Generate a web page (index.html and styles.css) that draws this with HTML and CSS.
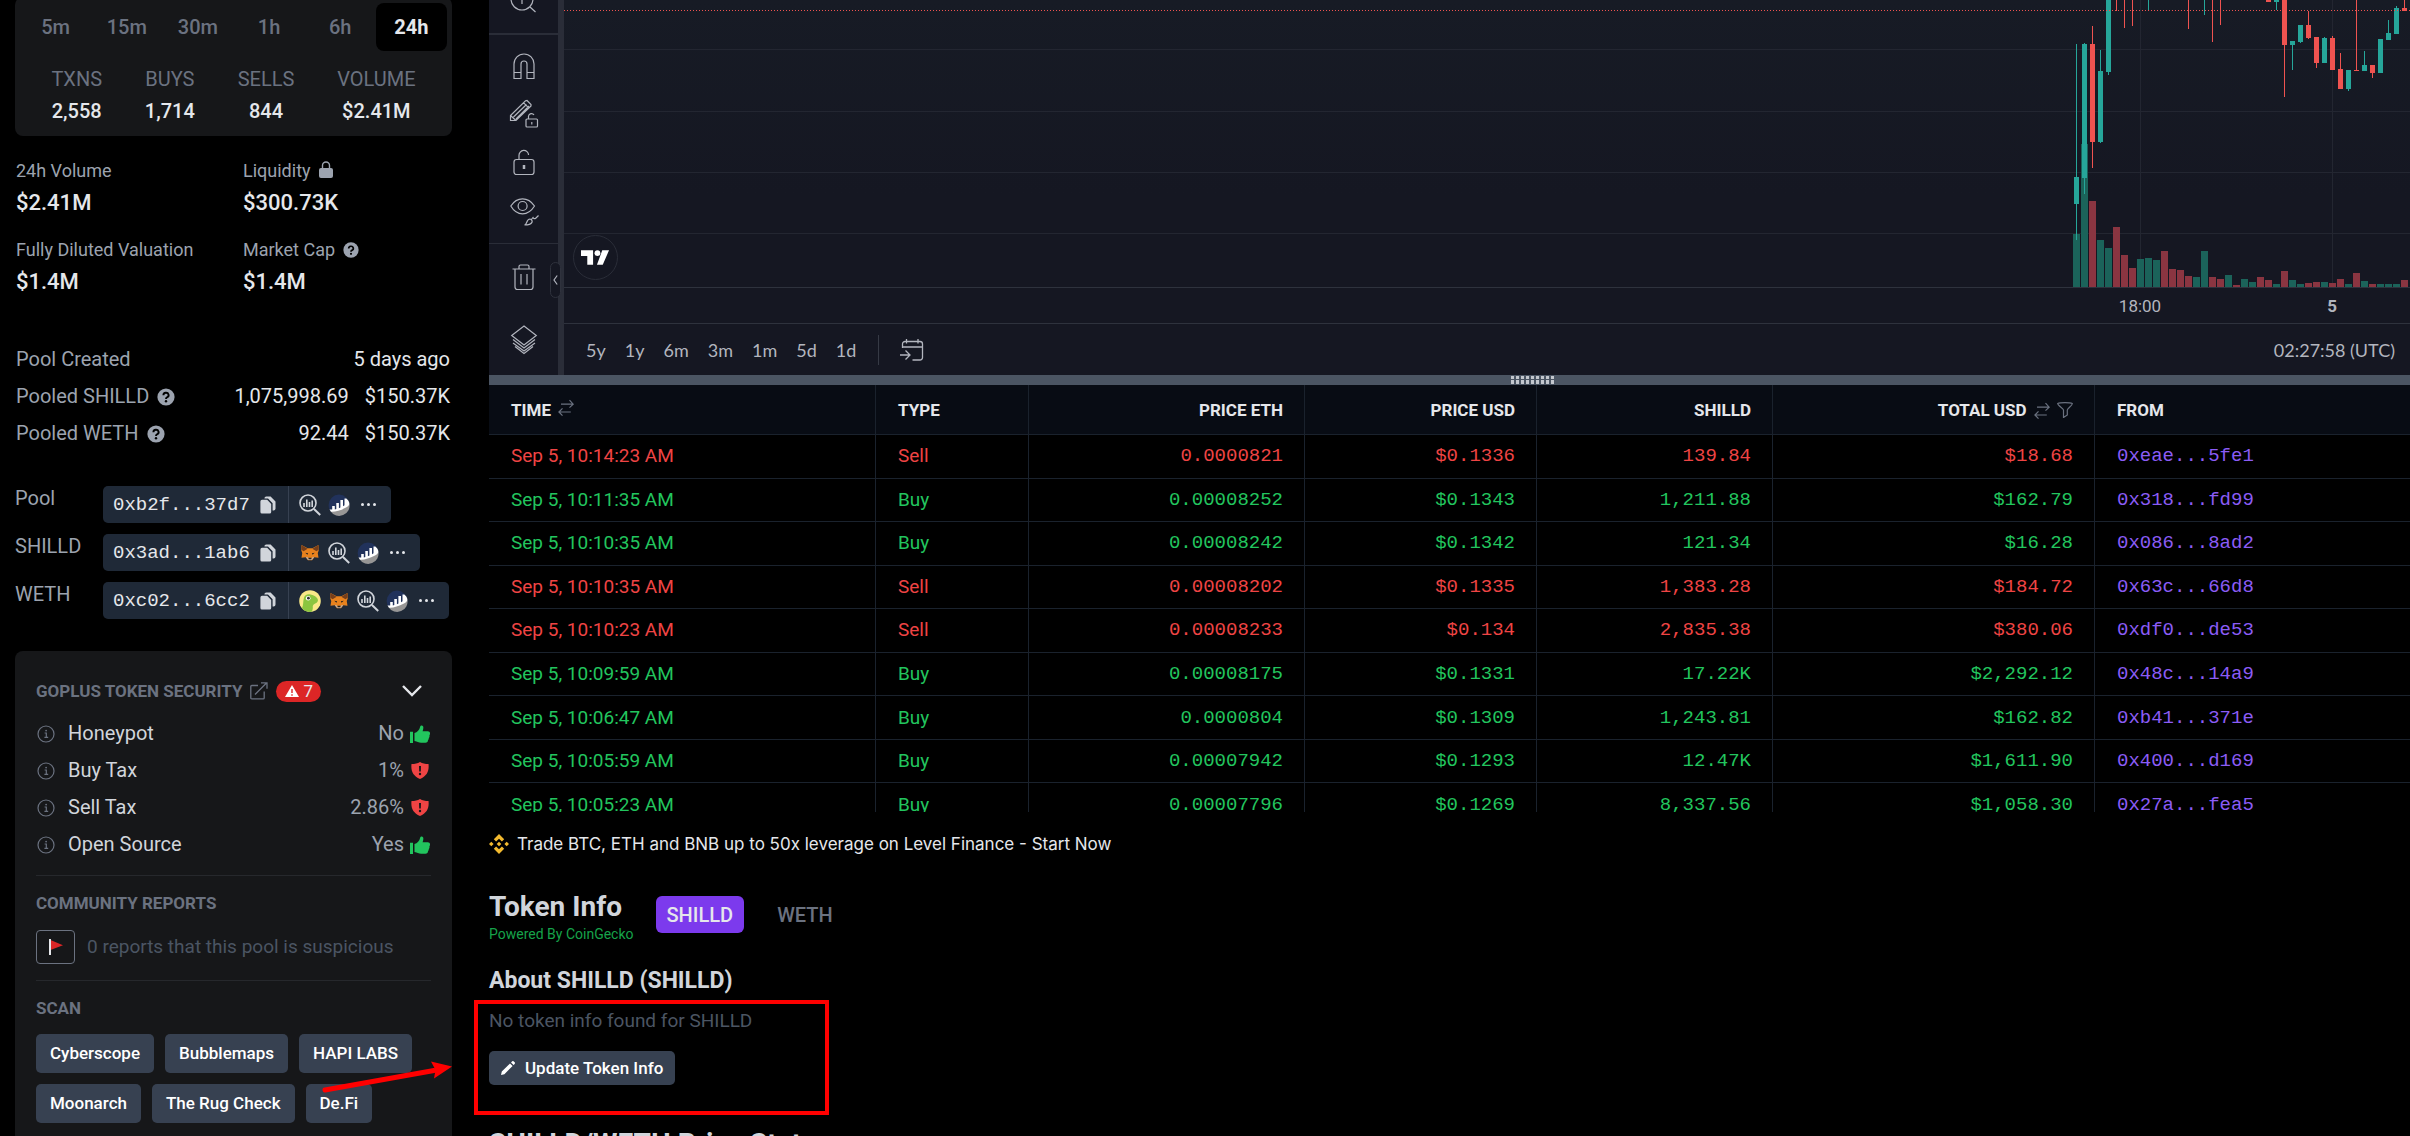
FILE: index.html
```html
<!DOCTYPE html>
<html lang="en">
<head>
    <meta charset="UTF-8">
    <meta name="viewport" content="width=device-width, initial-scale=1.0">
    <title>SHILLD / WETH</title>
    <link rel="stylesheet" href="styles.css">
</head>
<body>
<!-- shared icons -->
<svg class="defs" aria-hidden="true">
    <symbol id="i-help" viewBox="0 0 18 18"><circle cx="9" cy="9" r="8.6" fill="#9ca3af"/><path d="M6.4 7.2a2.6 2.4 0 1 1 3.6 2.2c-.8.4-1 .7-1 1.5" fill="none" stroke="#000" stroke-width="1.9"/><circle cx="9" cy="13.3" r="1.2" fill="#000"/></symbol>
    <symbol id="i-copy" viewBox="0 0 16 18"><path d="M2 3.8h5.2l4 4.2v8a1.6 1.6 0 0 1-1.6 1.6H2A1.6 1.6 0 0 1 .4 16V5.4A1.6 1.6 0 0 1 2 3.8z"/><path d="M4.4 2.6A2 2 0 0 1 6.4.5h4.2l4.9 5v6.900a2 2 0 0 1-2 2h-.9V7.200L8 2.600z"/></symbol>
    <symbol id="i-scan" viewBox="0 0 22 22"><g fill="none" stroke="#d1d5db" stroke-width="1.6"><circle cx="9" cy="9" r="8"/><path d="M15 15l6.200 6" stroke-width="2"/><path d="M5 9v4M7.800 5.500V13M10.500 8v5M13.200 6.500V13"/></g></symbol>
    <symbol id="i-ether" viewBox="0 0 22 22"><circle cx="11" cy="11" r="10.4" fill="#21325b"/><path d="M2.500 17.200C9 16.500 17 13 21.400 9.500A10.400 10.400 0 0 1 2.500 17.200z" fill="#979695"/><path d="M1.500 15.600h2.700V12h2.600v3.400l1.500-.4V9h2.600v5.200l1.500-.7V6h2.600v6.200l1.500-.9V4.600h1.800l1.800 1.600C22.600 10 21 12 18 13.600 12.500 16.600 7 18 3 17.700z" fill="#fff"/></symbol>
    <symbol id="i-fox" viewBox="0 0 20 18"><path d="M1 1l6.500 3.500h5L19 1l.2 6-1 2.500.8 5-4.500-.6-2.300 3.300H7.800l-2.300-3.300-4.500.6.800-5L.8 7z" fill="#e8821e"/><path d="M1 1l6.500 4-4.300 2.800L.9 6zM19 1l-6.500 4 4.300 2.800L19.100 6z" fill="#763e1a"/><path d="M7.300 13.700l-1.800.3 2.500 3h4l2.500-3-1.800-.3-.9 1.600H8.200z" fill="#c0ad9e"/><path d="M5 9.300l3 .6-.7 1.400zM15 9.300l-3 .6.700 1.400zM8.500 14.500h3v1.700h-3z" fill="#1f2020"/></symbol>
    <symbol id="i-gecko" viewBox="0 0 22 22"><circle cx="11" cy="11" r="10.8" fill="#f9e988"/><path d="M3 18.300C4.500 15 4 11.500 4.800 8.500 5.500 5 8.500 3.800 11.500 4.600c2.500.6 5 1.600 6.700 3.600 1.300 1.700.8 3.800-1 4.700-2.300 1-3.700 2.200-3.400 4.200.1 1.800-.3 3.500-1.300 4.700C8.500 22.200 5 21 3 18.300z" fill="#8bc53f"/><circle cx="9.200" cy="8.200" r="2.300" fill="#fff"/><circle cx="9.400" cy="8.200" r="1.400" fill="#333"/></symbol>
    <symbol id="i-info" viewBox="0 0 18 18"><circle cx="9" cy="9" r="8" fill="none" stroke="#6b7280" stroke-width="1.2"/><path d="M7.600 8h1.700v4.300M7.400 12.400h3.800" fill="none" stroke="#6b7280" stroke-width="1.2"/><circle cx="9.1" cy="5.6" r=".9" fill="#6b7280"/></symbol>
    <symbol id="i-thumb" viewBox="0 0 20 18"><path d="M0 6.800h3V18H0zM4.500 8c2.800-1 5-3 5.700-6.600C10.500 0 13 .2 13.300 2c.2 1.400-.2 2.900-.7 4.200h5.200c1.500 0 2.400 1.200 2.200 2.600 0 .7-.3 1.200-.6 1.600.3 1.200 0 2-.6 2.600.1 1-.2 1.800-.8 2.300 0 1.500-.9 2.500-2.600 2.500-3.800.2-6.700 0-9-1.200L4.500 16z" fill="#22c55e"/></symbol>
    <symbol id="i-shield" viewBox="0 0 18 17"><path d="M9 0c2.500 1.500 5 2 8.500 2C18.300 9 16 14 9 17 2 14-.3 9 .5 2 4 2 6.500 1.500 9 0z" fill="#ef4444"/><path d="M8 4h2l-.2 5.500H8.200z" fill="#161719"/><circle cx="9" cy="12" r="1.2" fill="#161719"/></symbol>
    <symbol id="i-swap" viewBox="0 0 16 18"><path d="M3 5.200h12M11.500 1.200l3.700 4-3.700 3.400M12.800 13H1M4.500 9.400L.9 13l3.600 3.700" fill="none" stroke="#6b7280" stroke-width="1.2"/></symbol>
</svg>

<div class="page">
    <aside class="sidebar">
        <section class="card stats">
            <div class="tabs">
                <button>5m</button><button>15m</button><button>30m</button><button>1h</button><button>6h</button><button class="on">24h</button>
            </div>
            <dl class="counts">
                <div><dt>TXNS</dt><dd>2,558</dd></div>
                <div><dt>BUYS</dt><dd>1,714</dd></div>
                <div><dt>SELLS</dt><dd>844</dd></div>
                <div><dt>VOLUME</dt><dd>$2.41M</dd></div>
            </dl>
        </section>

        <dl class="figures">
            <div><dt>24h Volume</dt><dd>$2.41M</dd></div>
            <div><dt>Liquidity <svg class="lock" viewBox="0 0 14 17"><path d="M3.500 8V4.500a3.500 3.500 0 0 1 7 0V8" fill="none" stroke="#9ca3af" stroke-width="1.4"/><rect y="7" width="14" height="10" rx="2" fill="#9ca3af"/></svg></dt><dd>$300.73K</dd></div>
            <div><dt>Fully Diluted Valuation</dt><dd>$1.4M</dd></div>
            <div><dt>Market Cap <svg class="help small"><use href="#i-help"/></svg></dt><dd>$1.4M</dd></div>
        </dl>

        <dl class="pooled">
            <div><dt>Pool Created</dt><dd>5 days ago</dd></div>
            <div><dt>Pooled SHILLD <svg class="help"><use href="#i-help"/></svg></dt><dd><span>1,075,998.69</span><span>$150.37K</span></dd></div>
            <div><dt>Pooled WETH <svg class="help"><use href="#i-help"/></svg></dt><dd><span>92.44</span><span>$150.37K</span></dd></div>
        </dl>

        <div class="addresses">
            <div class="address">
                <span class="name">Pool</span>
                <div class="chip">
                    <button class="hash">0xb2f...37d7 <svg class="copy"><use href="#i-copy"/></svg></button>
                    <div class="links">
                        <a href="#" aria-label="Scan"><svg><use href="#i-scan"/></svg></a>
                        <a href="#" aria-label="Explorer"><svg><use href="#i-ether"/></svg></a>
                        <button class="more" aria-label="More"><i></i><i></i><i></i></button>
                    </div>
                </div>
            </div>
            <div class="address">
                <span class="name">SHILLD</span>
                <div class="chip">
                    <button class="hash">0x3ad...1ab6 <svg class="copy"><use href="#i-copy"/></svg></button>
                    <div class="links">
                        <a href="#" aria-label="Add to wallet"><svg class="fox"><use href="#i-fox"/></svg></a>
                        <a href="#" aria-label="Scan"><svg><use href="#i-scan"/></svg></a>
                        <a href="#" aria-label="Explorer"><svg><use href="#i-ether"/></svg></a>
                        <button class="more" aria-label="More"><i></i><i></i><i></i></button>
                    </div>
                </div>
            </div>
            <div class="address">
                <span class="name">WETH</span>
                <div class="chip">
                    <button class="hash">0xc02...6cc2 <svg class="copy"><use href="#i-copy"/></svg></button>
                    <div class="links">
                        <a href="#" aria-label="CoinGecko"><svg><use href="#i-gecko"/></svg></a>
                        <a href="#" aria-label="Add to wallet"><svg class="fox"><use href="#i-fox"/></svg></a>
                        <a href="#" aria-label="Scan"><svg><use href="#i-scan"/></svg></a>
                        <a href="#" aria-label="Explorer"><svg><use href="#i-ether"/></svg></a>
                        <button class="more" aria-label="More"><i></i><i></i><i></i></button>
                    </div>
                </div>
            </div>
        </div>

        <section class="card security">
            <header>
                <h3>GOPLUS TOKEN SECURITY</h3>
                <a href="#" aria-label="Open report"><svg class="ext" viewBox="0 0 18 18"><path d="M8 3.500H1.800A1 1 0 0 0 .8 4.500v11.400a1 1 0 0 0 1 1h11.400a1 1 0 0 0 1-1V9.500M5 12.500L16.500 1M11 .8h6v6" fill="none" stroke="#6b7280" stroke-width="1.3"/></svg></a>
                <span class="badge"><svg viewBox="0 0 14 12"><path d="M7 0l7 12H0z" fill="#fff"/><path d="M7 4v4M7 9.300v1.400" stroke="#dc2626" stroke-width="1.4"/></svg>7</span>
                <button class="fold" aria-label="Collapse"><svg viewBox="0 0 20 12"><path d="M1 1l9 9 9-9" fill="none" stroke="#e5e7eb" stroke-width="2.4"/></svg></button>
            </header>
            <ul class="checks">
                <li><svg class="info"><use href="#i-info"/></svg>Honeypot<span>No</span><svg class="thumb"><use href="#i-thumb"/></svg></li>
                <li><svg class="info"><use href="#i-info"/></svg>Buy Tax<span>1%</span><svg class="shield"><use href="#i-shield"/></svg></li>
                <li><svg class="info"><use href="#i-info"/></svg>Sell Tax<span>2.86%</span><svg class="shield"><use href="#i-shield"/></svg></li>
                <li><svg class="info"><use href="#i-info"/></svg>Open Source<span>Yes</span><svg class="thumb"><use href="#i-thumb"/></svg></li>
            </ul>
            <div class="block">
                <h3>COMMUNITY REPORTS</h3>
                <div class="report">
                    <button aria-label="Report pool"><svg viewBox="0 0 14 16"><path d="M1.500 1L14 6.200 1.500 11z" fill="#dc2626"/><path d="M1 0v16" stroke="#e5e7eb" stroke-width="2"/></svg></button>
                    0 reports that this pool is suspicious
                </div>
            </div>
            <div class="block">
                <h3>SCAN</h3>
                <div class="scans">
                    <a class="btn" href="#">Cyberscope</a>
                    <a class="btn" href="#">Bubblemaps</a>
                    <a class="btn" href="#">HAPI LABS</a>
                    <a class="btn" href="#">Moonarch</a>
                    <a class="btn" href="#">The Rug Check</a>
                    <a class="btn" href="#">De.Fi</a>
                </div>
            </div>
        </section>
    </aside>

    <main class="main">
        <section class="chart">
            <nav class="tools">
                <div class="group first">
                    <button aria-label="Zoom in"><svg viewBox="0 0 28 28"><circle cx="12" cy="13" r="11"/><path d="M12 8v10M7 13h10M20 21l5.500 5"/></svg></button>
                </div>
                <div class="group middle">
                    <button aria-label="Magnet"><svg viewBox="0 0 28 28"><path d="M4 26.500V12a10 10 0 0 1 20 0v14.500h-7V12a3 3 0 0 0-6 0v14.500zM4 20.500h7M17 20.500h7"/></svg></button>
                    <button aria-label="Stay in drawing mode"><svg viewBox="0 0 28 28"><path d="M.5 20.500v-5L15.500.700l1.500-.200 4 4v1.500L6 20.500zM.5 15.500l5.500 5M3.500 17l13-12.500M6 19L19 6M13.500 2.700l5.200 5.200"/><rect x="16" y="19" width="11.5" height="8" rx="1"/><path d="M18.500 19v-3a3 3 0 0 1 5.500-1M21.800 22v2.500"/></svg></button>
                    <button aria-label="Lock drawings"><svg viewBox="0 0 28 28"><rect x="4" y="11.5" width="20" height="15" rx="2.5"/><path d="M9 11.500V7.500a4.800 4.800 0 0 1 9.600-.5"/><path d="M14 17v4" stroke-width="2.5"/></svg></button>
                    <button aria-label="Hide drawings"><svg viewBox="0 0 28 28"><path d="M.8 10C7 .5 18 .5 24.500 10 18 20.500 7 20.500.8 10z"/><circle cx="12.6" cy="10" r="4.5"/><path d="M14.500 29c3-.5 1.500-6 5.500-6 3.500 1 3.500 6-5.500 6zM21 24l2-2.500c.5 1 1.500 1.500 2.500 1l3-3"/></svg></button>
                </div>
                <div class="group last">
                    <button aria-label="Remove drawings"><svg viewBox="0 0 28 28"><path d="M2.500 6h23M9 6V3.500a1.500 1.500 0 0 1 1.500-1.500h7A1.500 1.500 0 0 1 19 3.500V6M5 6v18a2.500 2.500 0 0 0 2.500 2.500h13A2.500 2.500 0 0 0 23 24V6M11 11v10.500M17 11v10.500"/></svg></button>
                    <button aria-label="Object tree"><svg viewBox="0 0 28 28"><path d="M14 0l12.300 9.500L14 19 1.700 9.500zM3 13.500L14 22l11-8.500M3 17l11 8 11-8M5 20.500l9 7 9-7"/></svg></button>
                </div>
                <button class="collapse" aria-label="Collapse toolbar"><svg viewBox="0 0 5 10"><path d="M4.200.5L1 5l3.200 4.500" fill="none" stroke="#b2b5be" stroke-width="1.2"/></svg></button>
            </nav>
            <div class="plot">
                <div class="canvas">
                    <svg width="100%" height="324">
                        <path d="M0 49.500h5000M0 111.500h5000M0 172.500h5000M0 233.500h5000" stroke="#232631"/>
                        <path d="M0 287.500h5000M0 323.500h5000" stroke="#2e323d"/>
                        <!-- origin is the right edge of the plot -->
                        <svg x="100%" overflow="visible" id="series">
                            <path d="M-269.500 0v287M-77.500 0v287" stroke="#232631"/>
                        </svg>
                        <path d="M0 10.500h5000" stroke="#ef5350" stroke-dasharray="1 2"/>
                    </svg>
                    <a class="tv" href="#" aria-label="TradingView"><svg viewBox="0 0 30 16"><path d="M0 0h12.500v15H6.500V6H0zM22 0h7l-6.500 15H16.500z" fill="#fff"/><circle cx="17" cy="3" r="3" fill="#fff"/></svg></a>
                </div>
                <div class="ranges">
                    <button>5y</button><button>1y</button><button>6m</button><button>3m</button><button>1m</button><button>5d</button><button>1d</button>
                    <button class="goto" aria-label="Go to date"><svg viewBox="0 0 24 22"><path d="M2.500 9V5A2.500 2.500 0 0 1 5 2.500h15A2.500 2.500 0 0 1 22.500 5v13.500A2.500 2.500 0 0 1 20 21h-7.500M2.500 8h20M6.500 0v4.500M18 0v4.500M0 16h9.500M5.500 11.500L10 16l-4.500 4.500" fill="none" stroke="#b2b5be" stroke-width="1.3"/></svg></button>
                    <span class="clock">02:27:58 (UTC)</span>
                </div>
            </div>
        </section>

        <div class="handle"><i></i></div>

        <div class="trades">
            <table>
                <colgroup><col class="c-time"><col class="c-type"><col class="c-eth"><col class="c-usd"><col class="c-amount"><col class="c-total"><col></colgroup>
                <thead>
                    <tr><th>TIME <svg class="swap up"><use href="#i-swap"/></svg></th><th>TYPE</th><th class="num">PRICE ETH</th><th class="num">PRICE USD</th><th class="num">SHILLD</th><th class="num">TOTAL USD <svg class="swap"><use href="#i-swap"/></svg> <svg class="funnel" viewBox="0 0 16 16"><path d="M.7 1.500C3 .3 13 .3 15.300 1.500c.3 2-5 5-5 6.500v5L6.500 15.500V8C6.500 6.500.5 3.500.7 1.500z" fill="none" stroke="#6b7280" stroke-width="1.2"/></svg></th><th>FROM</th></tr>
                </thead>
                <tbody>
                    <tr class="sell"><td>Sep 5, 10:14:23 AM</td><td>Sell</td><td>0.0000821</td><td>$0.1336</td><td>139.84</td><td>$18.68</td><td><a href="#">0xeae...5fe1</a></td></tr>
                    <tr class="buy"><td>Sep 5, 10:11:35 AM</td><td>Buy</td><td>0.00008252</td><td>$0.1343</td><td>1,211.88</td><td>$162.79</td><td><a href="#">0x318...fd99</a></td></tr>
                    <tr class="buy"><td>Sep 5, 10:10:35 AM</td><td>Buy</td><td>0.00008242</td><td>$0.1342</td><td>121.34</td><td>$16.28</td><td><a href="#">0x086...8ad2</a></td></tr>
                    <tr class="sell"><td>Sep 5, 10:10:35 AM</td><td>Sell</td><td>0.00008202</td><td>$0.1335</td><td>1,383.28</td><td>$184.72</td><td><a href="#">0x63c...66d8</a></td></tr>
                    <tr class="sell"><td>Sep 5, 10:10:23 AM</td><td>Sell</td><td>0.00008233</td><td>$0.134</td><td>2,835.38</td><td>$380.06</td><td><a href="#">0xdf0...de53</a></td></tr>
                    <tr class="buy"><td>Sep 5, 10:09:59 AM</td><td>Buy</td><td>0.00008175</td><td>$0.1331</td><td>17.22K</td><td>$2,292.12</td><td><a href="#">0x48c...14a9</a></td></tr>
                    <tr class="buy"><td>Sep 5, 10:06:47 AM</td><td>Buy</td><td>0.0000804</td><td>$0.1309</td><td>1,243.81</td><td>$162.82</td><td><a href="#">0xb41...371e</a></td></tr>
                    <tr class="buy"><td>Sep 5, 10:05:59 AM</td><td>Buy</td><td>0.00007942</td><td>$0.1293</td><td>12.47K</td><td>$1,611.90</td><td><a href="#">0x400...d169</a></td></tr>
                    <tr class="buy"><td>Sep 5, 10:05:23 AM</td><td>Buy</td><td>0.00007796</td><td>$0.1269</td><td>8,337.56</td><td>$1,058.30</td><td><a href="#">0x27a...fea5</a></td></tr>
                </tbody>
            </table>
        </div>

        <a class="promo" href="#"><svg viewBox="0 0 20 20"><path d="M10 0l5.200 5.200-2.300 2.300L10 4.700 7.100 7.500 4.800 5.200zM2.300 7.700L4.600 10l-2.300 2.300L0 10zM17.700 7.700L20 10l-2.300 2.300-2.300-2.300zM10 7.700l2.300 2.300-2.300 2.300L7.700 10zM7.100 12.500L10 15.300l2.900-2.800 2.300 2.300L10 20l-5.200-5.200z" fill="#f3ba2f"/></svg>Trade BTC, ETH and BNB up to 50x leverage on Level Finance - Start Now</a>

        <section class="token">
            <header>
                <div>
                    <h2>Token Info</h2>
                    <a class="powered" href="#">Powered By CoinGecko</a>
                </div>
                <div class="pick"><button class="on">SHILLD</button><button>WETH</button></div>
            </header>
            <h3>About SHILLD (SHILLD)</h3>
            <p>No token info found for SHILLD</p>
            <button class="btn update"><svg viewBox="0 0 14 14"><path d="M0 14l.8-3.400L9 2.400l2.600 2.600-8.200 8.200zM10 1.400L11 .4a1.300 1.300 0 0 1 1.800 0l.8.800a1.300 1.300 0 0 1 0 1.800l-1 1z" fill="#fff"/></svg>Update Token Info</button>
            <h2 class="price">SHILLD/WETH Price Stats</h2>
        </section>
    </main>

    <div class="mark-box"></div>
    <svg class="mark-arrow" viewBox="0 0 132 34"><path d="M3 29L112 9.500" stroke="#f00" stroke-width="5" stroke-linecap="round"/><path d="M109 .5L130 5.500 112 17.500 113.500 9z" fill="#f00"/></svg>
</div>
<script>
var NS = 'http://www.w3.org/2000/svg',
    series = document.getElementById('series'),
    STEP = 8,
    START = -333,
    BASE = 287,
    UP = '#26a69a', DOWN = '#ef5350',
    VOL_UP = '#1b635a', VOL_DOWN = '#8a3541';

// top of each volume bar, negative for a falling one
var volume = [234,144,-201,240,248,-227,-255,-268,259,258,260,-251,-269,-270,-276,277,251,-277,-279,275,-285,
    279,282,-277,-280,284,-271,280,284,-283,-282,282,-283,-279,284,-273,281,-284,284,284,284,-280];

// index, wick top, wick bottom, body top, body bottom, rising
var candles = [
    [0,44,240,177,204,1],[1,43,194,44,178,1],[2,26,168,44,142,0],[3,50,143,71,142,1],[4,0,75,0,72,1],
    [5,0,11,0,0,0],[6,0,28,0,0,0],[7,0,26,0,0,0],[9,0,10,0,0,1],[14,0,29,0,0,0],[16,0,15,0,0,1],
    [17,0,42,0,0,0],[18,0,25,0,0,0],[24,0,2,0,2,0],[25,0,10,0,2,1],[26,0,97,0,45,0],[27,41,70,41,45,1],
    [28,25,43,25,42,1],[29,11,39,25,38,0],[30,37,68,37,63,0],[31,37,63,38,63,1],[32,36,70,38,70,0],
    [33,53,89,69,89,0],[34,70,91,70,89,1],[35,0,71,70,71,0],[36,51,71,65,71,1],[37,65,78,65,73,0],
    [38,39,73,39,73,1],[39,20,40,33,40,1],[40,6,34,8,34,1],[41,0,11,8,11,0]
];

function bar(x, top, bottom, width, color) {
    var r = document.createElementNS(NS, 'rect');
    r.setAttribute('x', x);
    r.setAttribute('y', top);
    r.setAttribute('width', width);
    r.setAttribute('height', bottom - top);
    r.setAttribute('fill', color);
    series.appendChild(r);
}

function label(x, text, cls) {
    var t = document.createElementNS(NS, 'text');
    t.setAttribute('x', x);
    t.setAttribute('y', 312);
    t.setAttribute('class', cls);
    t.textContent = text;
    series.appendChild(t);
}

volume.forEach(function(v, i) {
    bar(START + i * STEP - 4, Math.abs(v), BASE, 7, v > 0 ? VOL_UP : VOL_DOWN);
});
candles.forEach(function(c) {
    var x = START + c[0] * STEP - 1;
    bar(x, c[1], c[2], 1, c[5] ? UP : DOWN);
    bar(x - 2, c[3], c[4], 5, c[5] ? UP : DOWN);
});
label(-270, '18:00', 'tick');
label(-78, '5', 'tick strong');
</script>
</body>
</html>
```
FILE: styles.css
```css
* {
    box-sizing: border-box;
}
body {
    margin: 0;
    background: #000;
    color: #e5e7eb;
    font: 19px/24px Roboto, "Liberation Sans", sans-serif;
}
h2, h3, p, dl, dd, ul {
    margin: 0;
    padding: 0;
}
ul {
    list-style: none;
}
a {
    color: inherit;
    text-decoration: none;
}
button {
    margin: 0;
    padding: 0;
    border: 0;
    background: none;
    color: inherit;
    font: inherit;
}
svg {
    display: block;
    flex: none;
}
.defs {
    position: absolute;
    width: 0;
    height: 0;
}
.page {
    position: relative;
    display: flex;
    gap: 37px;
    height: 100vh;
    padding-left: 15px;
    overflow: hidden;
}
.sidebar {
    flex: none;
    width: 437px;
    font-size: 20px;
}
.main {
    flex: 1;
    min-width: 0;
}
.card {
    border-radius: 8px;
    background: #161719;
}

/* stats card */
.stats {
    padding: 6px 5px 11px;
    margin-top: -3px;
}
.tabs {
    display: grid;
    grid-template-columns: repeat(6, 1fr);
}
.tabs button {
    height: 48px;
    border-radius: 8px;
    color: #6b7280;
    font-weight: 500;
}
.tabs .on {
    background: #000;
    color: #e5e7eb;
    font-weight: 700;
}
.counts {
    display: flex;
    justify-content: space-around;
    padding: 14px 10px 0;
    text-align: center;
}
.counts dt {
    color: #6b7280;
    line-height: 28px;
}
.counts dd {
    font-weight: 500;
    line-height: 28px;
    padding-top: 4px;
}

.figures {
    display: grid;
    grid-template-columns: 227px 1fr;
    row-gap: 15px;
    padding: 22px 1px 0;
}
.figures dt {
    display: flex;
    align-items: center;
    gap: 8px;
    color: #9ca3af;
    font-size: 18px;
    line-height: 26px;
}
.figures dd {
    font-size: 22px;
    font-weight: 500;
    line-height: 38px;
}
.lock {
    width: 14px;
    height: 17px;
    margin-bottom: 4px;
}
.help {
    width: 18px;
    height: 18px;
}
.help.small {
    width: 16px;
    height: 16px;
}

.pooled {
    display: grid;
    gap: 10px;
    padding: 45px 2px 0 1px;
}
.pooled div, .pooled dt, .pooled dd {
    display: flex;
    align-items: center;
}
.pooled div {
    justify-content: space-between;
    line-height: 27px;
}
.pooled dt {
    gap: 8px;
    color: #9ca3af;
}
.pooled dd {
    gap: 16px;
}

.addresses {
    display: grid;
    gap: 11px;
    padding-top: 39px;
}
.address {
    display: flex;
}
.address .name {
    width: 88px;
    color: #9ca3af;
}
.chip {
    display: flex;
    height: 37px;
    border-radius: 5px;
    background: #1f2937;
}
.hash {
    display: flex;
    align-items: center;
    gap: 10px;
    padding: 0 12px 0 10px;
    border-right: 1px solid #374151;
    font: 19px "Liberation Mono", monospace;
}
.copy {
    width: 16px;
    height: 18px;
    fill: #d1d5db;
}
.links {
    display: flex;
    align-items: center;
    gap: 7px;
    padding: 0 11px 0 10px;
}
.links svg {
    width: 22px;
    height: 22px;
}
.links .fox {
    height: 17px;
}
.more {
    display: flex;
    gap: 3px;
    padding: 8px 4px;
}
.more i {
    width: 3px;
    height: 3px;
    border-radius: 50%;
    background: #e5e7eb;
}

/* token security */
.security {
    height: 600px;
    margin-top: 32px;
    padding: 24px 21px;
}
.security h3 {
    color: #6b7280;
    font-size: 17px;
    line-height: 32px;
}
.security header {
    display: flex;
    align-items: center;
    gap: 8px;
}
.ext {
    width: 18px;
    height: 18px;
}
.badge {
    display: flex;
    align-items: center;
    gap: 4px;
    height: 21px;
    padding: 0 8px 0 9px;
    border-radius: 11px;
    background: #dc2626;
    font-size: 17px;
}
.badge svg {
    width: 14px;
    height: 12px;
}
.fold {
    margin: 0 9px 0 auto;
}
.fold svg {
    width: 20px;
    height: 12px;
}
.checks {
    padding: 8px 1px 12px;
}
.checks li {
    display: flex;
    align-items: center;
    padding: 5px 0;
    color: #d1d5db;
    line-height: 27px;
}
.checks span {
    margin-left: auto;
    padding-right: 6px;
    color: #9ca3af;
}
.info {
    width: 18px;
    height: 18px;
    margin-right: 13px;
}
.thumb {
    width: 20px;
    height: 18px;
}
.shield {
    width: 18px;
    height: 17px;
    margin: 0 1px;
}
.block {
    padding-top: 11px;
    border-top: 1px solid #26282c;
}
.report {
    display: flex;
    align-items: center;
    gap: 12px;
    padding: 11px 0 16px;
    color: #4b5563;
    font-size: 19px;
}
.report button {
    display: grid;
    place-items: center;
    width: 39px;
    height: 34px;
    border: 1px solid #6b7280;
    border-radius: 4px;
}
.report svg {
    width: 14px;
    height: 16px;
}
.scans {
    display: flex;
    flex-wrap: wrap;
    gap: 11px;
    padding-top: 10px;
}
.btn {
    padding: 0 14px;
    border-radius: 5px;
    background: #374151;
    color: #fff;
    font-size: 17px;
    font-weight: 500;
    line-height: 39px;
}

/* chart */
.chart {
    display: flex;
    height: 375px;
    background: #151722;
}
.tools {
    position: relative;
    flex: none;
    width: 75px;
    border-right: 6px solid #2a2d38;
}
.group {
    display: flex;
    flex-direction: column;
    align-items: center;
}
.group button {
    display: grid;
    flex: none;
    place-items: center;
    width: 48px;
    height: 48px;
}
.group svg {
    width: 28px;
    height: 28px;
    overflow: visible;
    fill: none;
    stroke: #b2b5be;
    stroke-width: 1.2;
}
.first {
    justify-content: flex-end;
    height: 35px;
    padding-bottom: 9px;
    border-bottom: 2px solid #2a2d38;
}
.middle {
    padding: 7px 0 9px;
    border-bottom: 1px solid #2a2d38;
}
.last {
    gap: 15px;
    padding-top: 9px;
}
.collapse {
    position: absolute;
    top: 262px;
    right: -3px;
    display: grid;
    place-items: center;
    width: 11px;
    height: 36px;
    border: 1px solid #2f323d;
    border-radius: 6px;
    background: #151722;
}
.collapse svg {
    width: 5px;
    height: 10px;
}
.plot {
    flex: 1;
    min-width: 0;
}
.canvas {
    position: relative;
    background: linear-gradient(#171b25, #151722 60%);
}
.tick {
    fill: #b2b5be;
    font: 17px Roboto, sans-serif;
    text-anchor: middle;
}
.strong {
    font-weight: 700;
}
.tv {
    position: absolute;
    left: 9px;
    bottom: 44px;
    display: grid;
    place-items: center;
    width: 45px;
    height: 45px;
    border: 1px solid #2a2d38;
    border-radius: 50%;
    background: #151722;
}
.tv svg {
    width: 29px;
    height: 16px;
}
.ranges {
    display: flex;
    align-items: center;
    gap: 19px;
    height: 51px;
    padding: 0 15px 0 22px;
    color: #b2b5be;
    font: 18px Lato, sans-serif;
}
.goto {
    padding: 4px 0 4px 21px;
    margin-left: 3px;
    border-left: 1px solid #363a45;
}
.goto svg {
    width: 24px;
    height: 22px;
}
.clock {
    margin-left: auto;
}
.handle {
    height: 10px;
    padding: 1px 0 0 1022px;
    background: #4b5563;
}
.handle i {
    display: block;
    width: 43px;
    height: 8px;
    background:
        linear-gradient(#4b5563, #4b5563) 0 3px / 100% 1px no-repeat,
        repeating-linear-gradient(90deg, #c3c7ce 0 3px, #4b5563 3px 5px);
}

/* trades */
.trades {
    height: 427px;
    overflow: hidden;
}
table {
    width: 100%;
    height: 442px;
    border-spacing: 0;
    table-layout: fixed;
}
.c-time { width: 387px; }
.c-type { width: 153px; }
.c-eth { width: 276px; }
.c-usd { width: 232px; }
.c-amount { width: 236px; }
.c-total { width: 322px; }
th, td {
    padding: 0 21px 0 22px;
    border-right: 1px solid #1a222d;
    border-bottom: 1px solid #1a222d;
    text-align: left;
}
th:last-child, td:last-child {
    border-right: 0;
}
th {
    height: 50px;
    background: #080c14;
    font-size: 17px;
    font-weight: 700;
}
th svg {
    display: inline-block;
}
.num {
    text-align: right;
}
td:nth-child(n+3) {
    font: 19px "Liberation Mono", monospace;
    text-align: right;
}
td:last-child {
    color: #8b5cf6;
    text-align: left;
}
.sell {
    color: #ef4444;
}
.buy {
    color: #22c55e;
}
.swap {
    width: 16px;
    height: 18px;
    margin-left: 3px;
    vertical-align: -4px;
}
.up {
    vertical-align: -1px;
}
.funnel {
    width: 16px;
    height: 16px;
    margin-left: 3px;
    vertical-align: -2px;
}

.promo {
    display: flex;
    align-items: center;
    gap: 8px;
    padding: 20px 0 18px;
    font: 17px/24px Inter, sans-serif;
}
.promo svg {
    width: 20px;
    height: 20px;
}

/* token info */
.token header {
    display: flex;
    gap: 22px;
    padding-top: 16px;
    margin-bottom: 21px;
}
.token h2 {
    color: #d1d5db;
    font-size: 28px;
    line-height: 34px;
}
.powered {
    display: block;
    color: #16a34a;
    font-size: 14px;
    line-height: 20px;
}
.pick {
    display: flex;
    gap: 22px;
    padding-top: 6px;
}
.pick button {
    height: 37px;
    padding: 0 11px;
    border-radius: 6px;
    color: #6b7280;
    font-size: 20px;
    font-weight: 500;
}
.pick .on {
    background: #7c3aed;
    color: #e5e7eb;
}
.token h3 {
    color: #d1d5db;
    font-size: 23px;
    font-weight: 700;
    line-height: 32px;
}
.token p {
    padding: 12px 0 18px;
    color: #4b5563;
}
.update {
    display: flex;
    align-items: center;
    gap: 10px;
    padding: 0 12px;
    line-height: 34px;
}
.update svg {
    width: 14px;
    height: 14px;
}
.token .price {
    padding-top: 42px;
}

/* red annotations over the page */
.mark-box {
    position: absolute;
    left: 474px;
    top: 1000px;
    width: 355px;
    height: 115px;
    border: 4px solid #f00;
}
.mark-arrow {
    position: absolute;
    left: 322px;
    top: 1061px;
    width: 132px;
    height: 34px;
}
```
